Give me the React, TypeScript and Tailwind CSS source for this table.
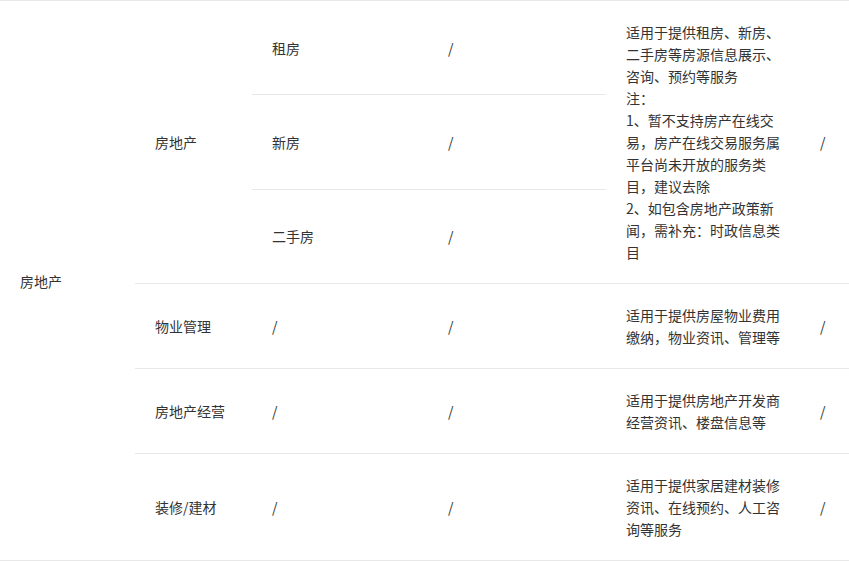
const rowClass = "border-b border-[#e8e8e8]";
const cell = "px-5 py-5 align-middle";

export default function App() {
  return (
    <div className="w-[849px] bg-white font-['Microsoft_YaHei','Noto_Sans_CJK_SC',sans-serif] text-[14px] leading-[22px] text-[#333]">
      <table className="w-[849px] table-fixed border-collapse border-t border-[#e8e8e8]">
        <colgroup>
          <col className="w-[135px]" />
          <col className="w-[117px]" />
          <col className="w-[176px]" />
          <col className="w-[178px]" />
          <col className="w-[194px]" />
          <col className="w-[49px]" />
        </colgroup>
        <tbody>
          <tr className={rowClass}>
            <td rowSpan={6} className={`${cell} border-b border-[#e8e8e8]`}>
              房地产
            </td>
            <td rowSpan={3} className={`${cell} border-b border-[#e8e8e8]`}>
              房地产
            </td>
            <td className={cell}>租房</td>
            <td className={cell}>/</td>
            <td rowSpan={3} className={`${cell} border-b border-[#e8e8e8]`}>
              适用于提供租房、新房、二手房等房源信息展示、咨询、预约等服务
              <br />
              注：
              <br />
              1、暂不支持房产在线交易，房产在线交易服务属平台尚未开放的服务类目，建议去除
              <br />
              2、如包含房地产政策新闻，需补充：时政信息类目
            </td>
            <td rowSpan={3} className={`${cell} border-b border-[#e8e8e8]`}>
              /
            </td>
          </tr>
          <tr className={rowClass}>
            <td className={cell}>新房</td>
            <td className={cell}>/</td>
          </tr>
          <tr className={rowClass}>
            <td className={cell}>二手房</td>
            <td className={cell}>/</td>
          </tr>
          <tr className={rowClass}>
            <td className={cell}>物业管理</td>
            <td className={cell}>/</td>
            <td className={cell}>/</td>
            <td className={cell}>适用于提供房屋物业费用缴纳，物业资讯、管理等</td>
            <td className={cell}>/</td>
          </tr>
          <tr className={rowClass}>
            <td className={cell}>房地产经营</td>
            <td className={cell}>/</td>
            <td className={cell}>/</td>
            <td className={cell}>适用于提供房地产开发商经营资讯、楼盘信息等</td>
            <td className={cell}>/</td>
          </tr>
          <tr className={rowClass}>
            <td className={cell}>装修/建材</td>
            <td className={cell}>/</td>
            <td className={cell}>/</td>
            <td className={cell}>适用于提供家居建材装修资讯、在线预约、人工咨询等服务</td>
            <td className={cell}>/</td>
          </tr>
        </tbody>
      </table>
    </div>
  );
}
